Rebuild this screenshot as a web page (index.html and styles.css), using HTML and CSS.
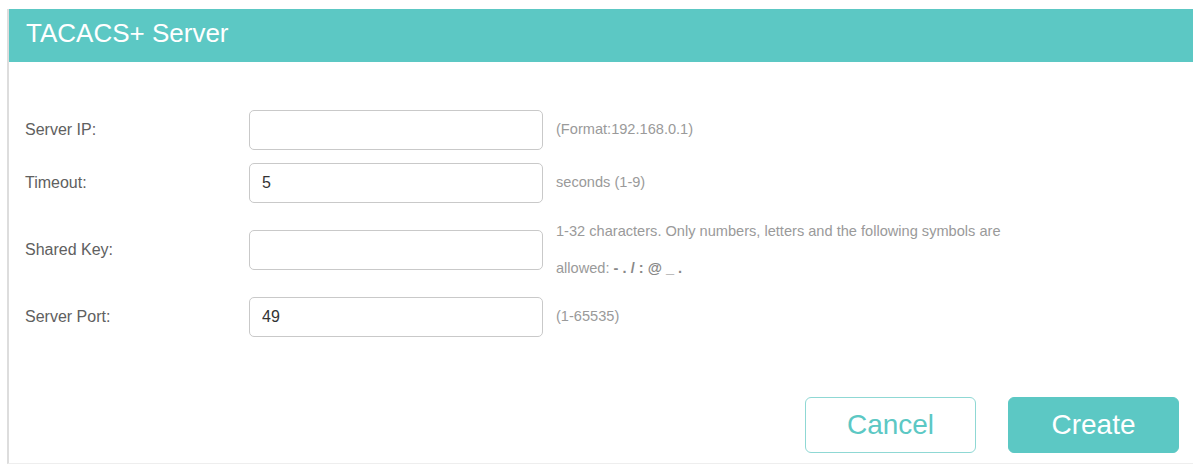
FILE: index.html
```html
<!DOCTYPE html>
<html lang="en">
<head>
  <meta charset="UTF-8">
  <title>TACACS+ Server</title>
  <link rel="stylesheet" href="styles.css">
</head>
<body>
  <div class="panel">
    <div class="panel-head">TACACS+ Server</div>

    <div class="panel-body">
      <div class="row">
        <label class="label" for="serverIp">Server IP:</label>
        <input class="field" type="text" id="serverIp">
        <div class="hint">(Format:192.168.0.1)</div>
      </div>
      <div class="row">
        <label class="label" for="timeout">Timeout:</label>
        <input class="field" type="text" id="timeout" value="5">
        <div class="hint">seconds (1-9)</div>
      </div>
      <div class="row tall">
        <label class="label" for="sharedKey">Shared Key:</label>
        <input class="field" type="text" id="sharedKey">
        <div class="hint">1-32 characters. Only numbers, letters and the following symbols are<br>allowed: <b>- . / : @ _ .</b></div>
      </div>
      <div class="row">
        <label class="label" for="serverPort">Server Port:</label>
        <input class="field" type="text" id="serverPort" value="49">
        <div class="hint">(1-65535)</div>
      </div>

      <div class="actions">
        <button class="btn btn-ghost">Cancel</button>
        <button class="btn btn-fill">Create</button>
      </div>
    </div>
  </div>
</body>
</html>
```

FILE: styles.css
```css
* { margin: 0; padding: 0; box-sizing: border-box; }

body {
  font-family: 'Liberation Sans', Arial, sans-serif;
  background: #fff;
  color: #555;
  padding: 9px 0 0 7px;
}

.panel {
  border-left: 2px solid #ddd;
  border-bottom: 1px solid #eee;
  height: 455px;
}

.panel-head {
  background: #5cc8c4;
  color: #fff;
  font-size: 26px;
  height: 53px;
  line-height: 48px;
  padding-left: 17px;
}

.panel-body {
  padding: 41px 14px 0 16px;
}

.row {
  display: grid;
  grid-template-columns: 211px 294px 1fr;
  column-gap: 13px;
  align-items: center;
  min-height: 53px;
}

.row.tall {
  min-height: 81px;
}

.label {
  font-size: 16px;
  color: #606060;
}

.field {
  height: 40px;
  border: 1px solid #c9c9c9;
  border-radius: 5px;
  padding: 0 12px;
  font-family: inherit;
  font-size: 16px;
  color: #333;
  outline: none;
}

.hint {
  font-size: 14.6px;
  color: #9a9a9a;
  line-height: 37px;
}

.hint b {
  color: #888;
  font-weight: bold;
}

.actions {
  display: flex;
  justify-content: flex-end;
  gap: 32px;
  margin-top: 54px;
}

.btn {
  width: 171px;
  height: 56px;
  border-radius: 6px;
  font-family: inherit;
  font-size: 28px;
  cursor: pointer;
}

.btn-ghost {
  background: #fff;
  color: #5cc8c4;
  border: 1px solid #8fd8d4;
}

.btn-fill {
  background: #5cc8c4;
  color: #fff;
  border: 1px solid #5cc8c4;
}
```
